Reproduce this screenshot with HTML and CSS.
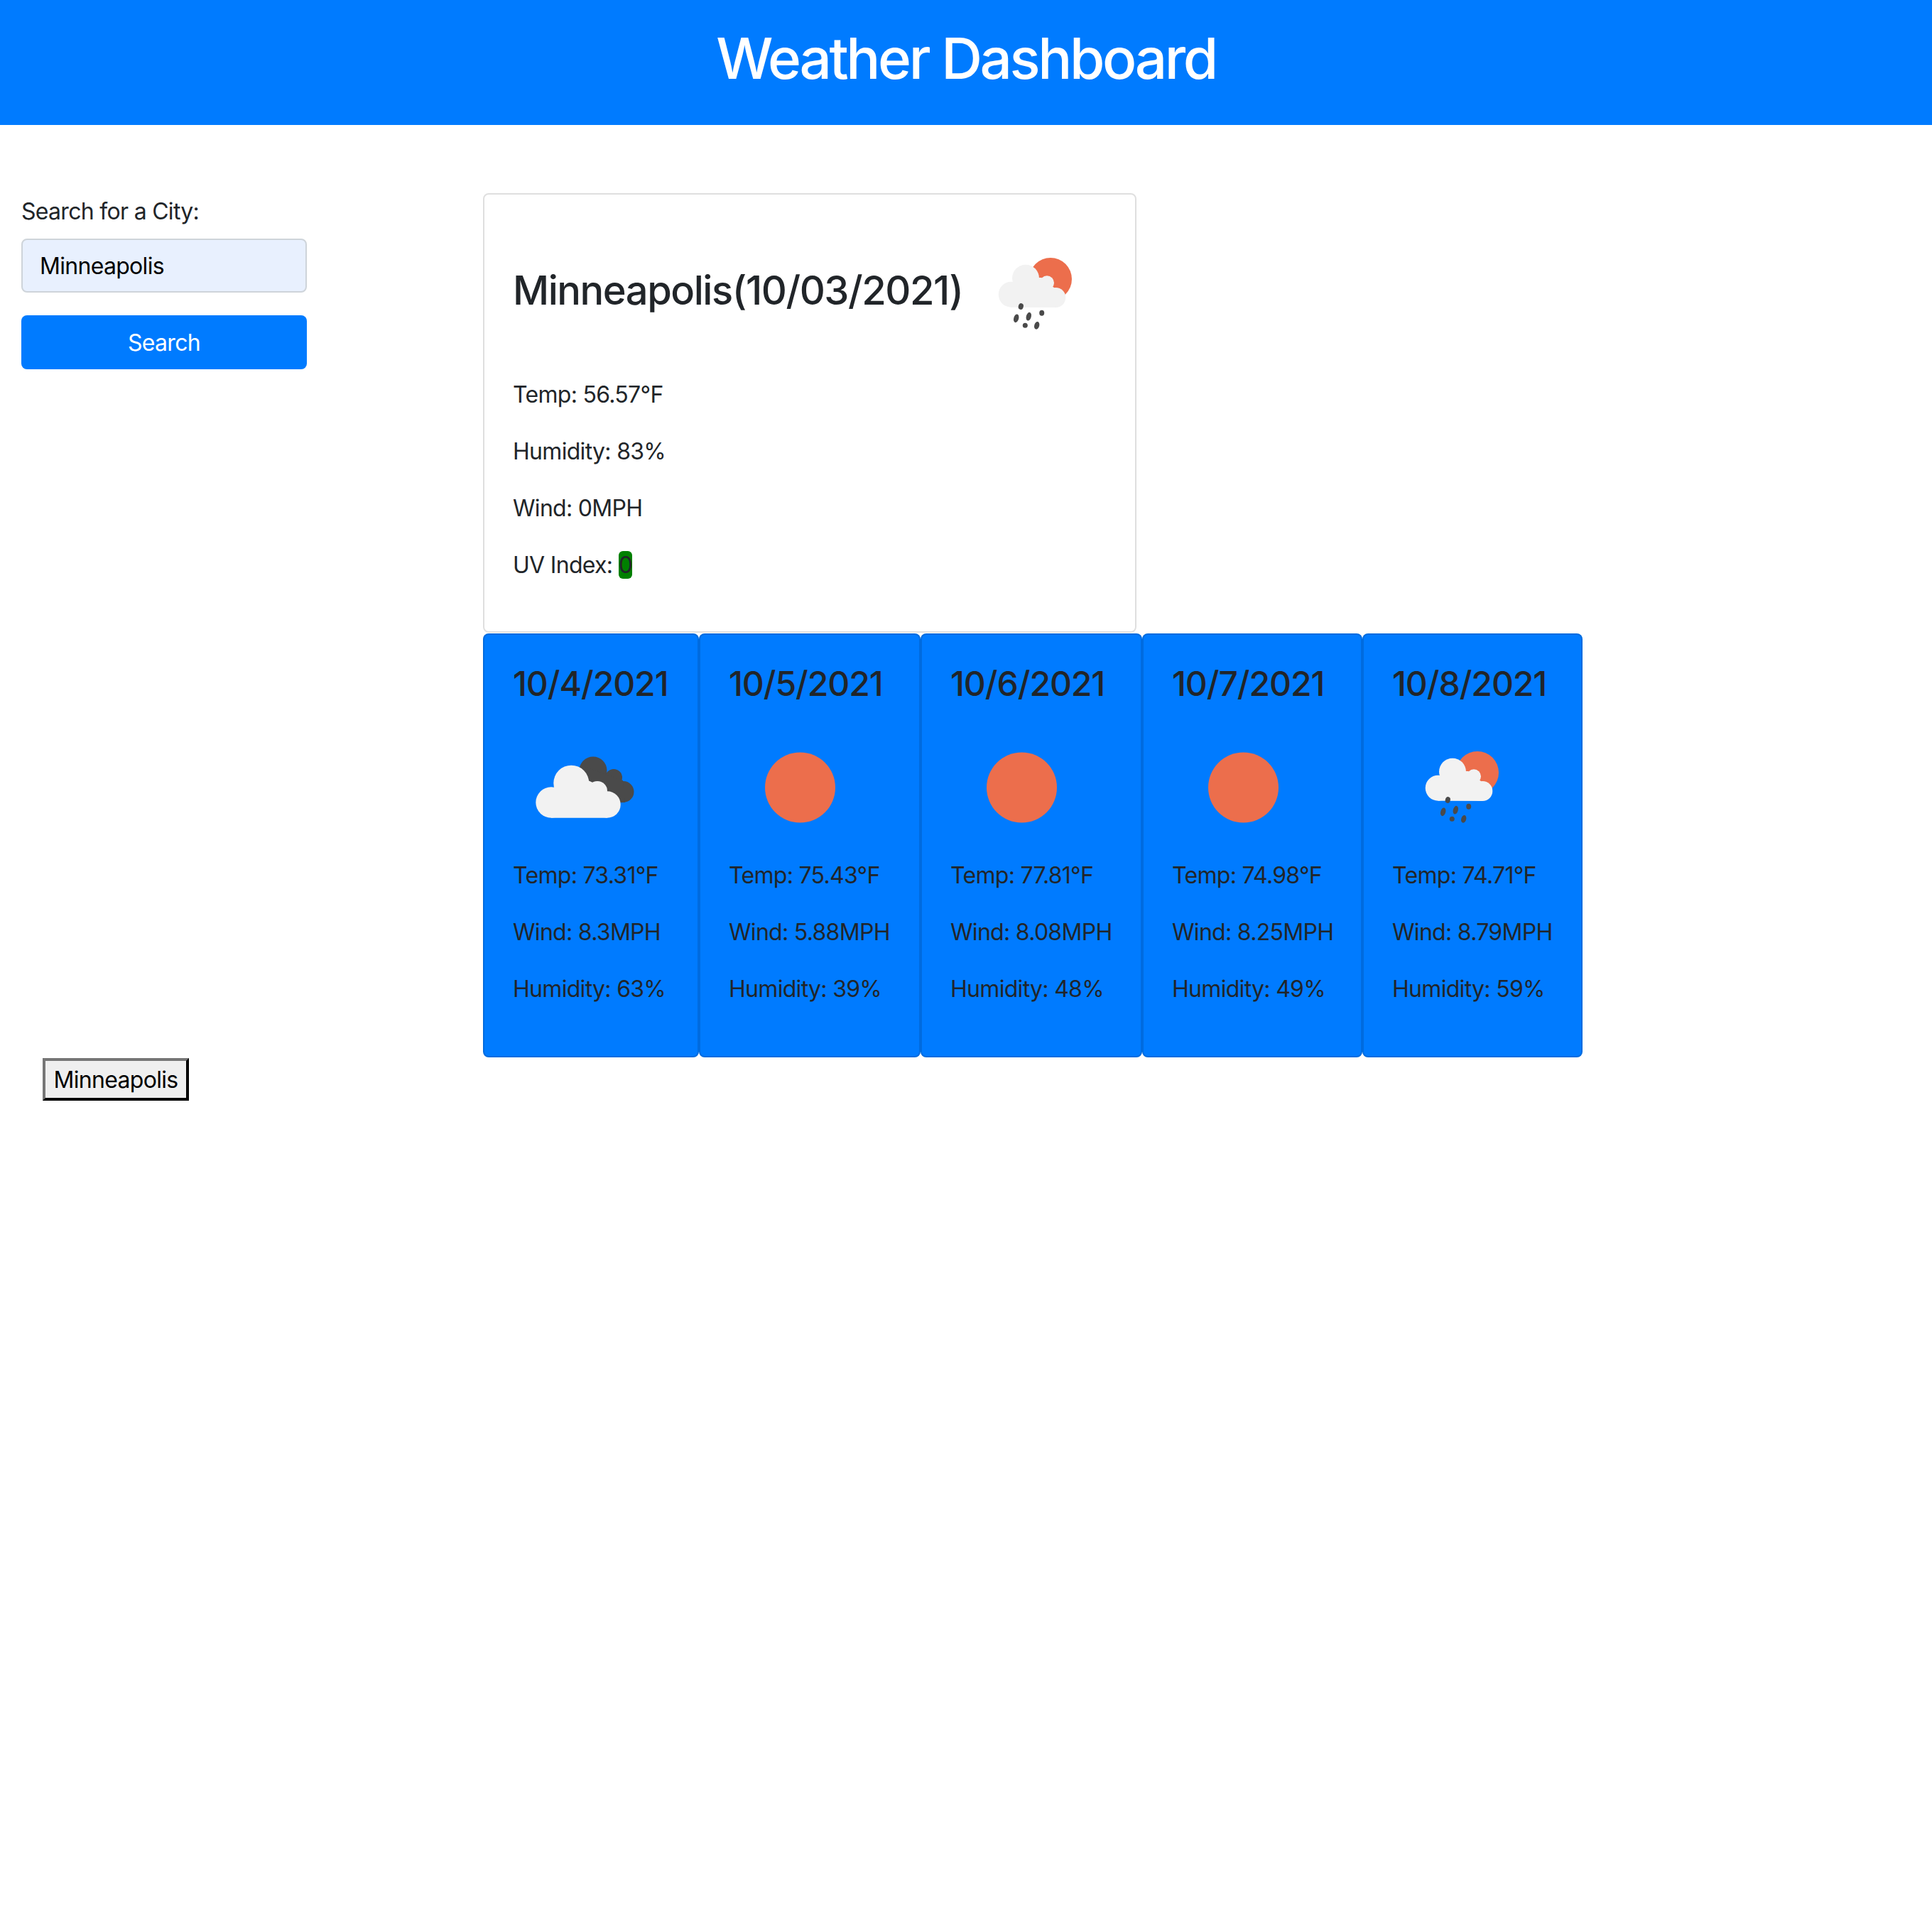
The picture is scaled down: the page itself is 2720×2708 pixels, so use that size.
FILE: index.html
```html
<!DOCTYPE html>
<html>
<head>
    <title>Weather Dashboard</title>
    <link rel="stylesheet" href="styles.css">
</head>
<body>

<svg class="iconDefs" width="0" height="0">
    <defs>
        <symbol id="iconSun" viewBox="0 0 200 200">
            <circle cx="100.500" cy="100" r="49.500" fill="#ec6e4c"/>
        </symbol>
        <symbol id="iconClouds" viewBox="0 0 200 200">
            <g fill="#4a4a4a">
                <circle cx="113" cy="76" r="19.5"/>
                <circle cx="142" cy="86" r="12"/>
                <circle cx="155.500" cy="106" r="15"/>
                <path d="M100 70 L155 90 L158 121 L130 122 Z"/>
            </g>
            <g fill="#f2f2f2">
                <circle cx="54" cy="121" r="21.700"/>
                <circle cx="82.300" cy="93.700" r="25"/>
                <circle cx="119" cy="105" r="14"/>
                <circle cx="133" cy="124" r="18.700"/>
                <path d="M54 142.700 V105 L82 90 H106 L119 96 L129 107 L133 142.700 Z"/>
            </g>
        </symbol>
        <symbol id="iconRain" viewBox="0 0 200 200">
            <circle cx="120" cy="79" r="30" fill="#ec6e4c"/>
            <g fill="#f2f2f2">
                <circle cx="64.700" cy="100.700" r="18"/>
                <circle cx="85" cy="77.700" r="19"/>
                <circle cx="115" cy="84.300" r="10"/>
                <circle cx="127.300" cy="105" r="14"/>
                <path d="M64.700 118.700 V90 L85 77 H107 L118 85 L126 92 L127.300 119 Z"/>
            </g>
            <g fill="#4a4a4a">
                <ellipse cx="78.300" cy="117.500" rx="3.500" ry="4.500" transform="rotate(15 78.300 117.500)"/>
                <ellipse cx="71.700" cy="134.300" rx="3.500" ry="6" transform="rotate(15 71.700 134.300)"/>
                <ellipse cx="89.300" cy="131.700" rx="3.500" ry="6" transform="rotate(15 89.300 131.700)"/>
                <ellipse cx="107.700" cy="126.700" rx="3.500" ry="4"/>
                <ellipse cx="84.300" cy="144.300" rx="3.500" ry="3.500"/>
                <ellipse cx="100.700" cy="144.300" rx="3.500" ry="5.500" transform="rotate(15 100.700 144.300)"/>
            </g>
        </symbol>
    </defs>
</svg>

<header class="pageHeader">
    <h1>Weather Dashboard</h1>
</header>

<div class="pageRow">
    <div class="searchCol">
        <label class="searchLabel" for="cityInput">Search for a City:</label>
        <input class="cityInput" type="text" id="cityInput" value="Minneapolis">
        <button class="searchBtn">Search</button>
    </div>

    <div class="weatherCol">
        <div class="currentCard">
            <h2 class="currentTitle">
                <span class="currentName">Minneapolis(10/03/2021)</span>
                <svg class="weatherIcon"><use href="#iconRain"/></svg>
            </h2>
            <p>Temp: 56.57°F</p>
            <p>Humidity: 83%</p>
            <p>Wind: 0MPH</p>
            <p>UV Index: <span class="uvBadge">0</span></p>
        </div>

        <div class="forecastRow">
            <div class="forecastCard">
                <h3>10/4/2021</h3>
                <svg class="weatherIcon"><use href="#iconClouds"/></svg>
                <p>Temp: 73.31°F</p>
                <p>Wind: 8.3MPH</p>
                <p>Humidity: 63%</p>
            </div>
            <div class="forecastCard">
                <h3>10/5/2021</h3>
                <svg class="weatherIcon"><use href="#iconSun"/></svg>
                <p>Temp: 75.43°F</p>
                <p>Wind: 5.88MPH</p>
                <p>Humidity: 39%</p>
            </div>
            <div class="forecastCard">
                <h3>10/6/2021</h3>
                <svg class="weatherIcon"><use href="#iconSun"/></svg>
                <p>Temp: 77.81°F</p>
                <p>Wind: 8.08MPH</p>
                <p>Humidity: 48%</p>
            </div>
            <div class="forecastCard">
                <h3>10/7/2021</h3>
                <svg class="weatherIcon"><use href="#iconSun"/></svg>
                <p>Temp: 74.98°F</p>
                <p>Wind: 8.25MPH</p>
                <p>Humidity: 49%</p>
            </div>
            <div class="forecastCard">
                <h3>10/8/2021</h3>
                <svg class="weatherIcon"><use href="#iconRain"/></svg>
                <p>Temp: 74.71°F</p>
                <p>Wind: 8.79MPH</p>
                <p>Humidity: 59%</p>
            </div>
        </div>
    </div>
</div>

<div class="historyList">
    <button class="historyBtn">Minneapolis</button>
</div>

</body>
</html>
```

FILE: styles.css
```css
body {
    margin: 0;
    font-family: Inter, "Liberation Sans", sans-serif;
    font-size: 32px;
    line-height: 48px;
    letter-spacing: -0.7px;
    color: #212529;
    background: #fff;
}
p {
    margin: 0 0 32px;
}
.iconDefs {
    display: block;
    height: 0;
}
.pageHeader {
    height: 176px;
    padding-top: 34px;
    box-sizing: border-box;
    background: #007bff;
    color: #fff;
    text-align: center;
}
.pageHeader h1 {
    margin: 0;
    font-size: 80px;
    line-height: 96px;
    font-weight: 500;
    letter-spacing: -3.4px;
}
.pageRow {
    display: flex;
    padding-top: 96px;
}
.searchCol {
    flex: none;
    width: 402px;
    margin: 0 248px 0 30px;
    display: flex;
    flex-direction: column;
}
.searchLabel {
    padding-top: 2px;
    margin-bottom: 14px;
}
.cityInput {
    height: 76px;
    padding: 0 24px;
    box-sizing: border-box;
    border: 2px solid #ced4da;
    border-radius: 8px;
    background: #e8f0fe;
    font: inherit;
    letter-spacing: inherit;
    color: #000;
    margin-bottom: 32px;
}
.searchBtn {
    height: 76px;
    padding-top: 3px;
    border: 0;
    border-radius: 8px;
    background: #007bff;
    color: #fff;
    font: inherit;
    letter-spacing: inherit;
}
.weatherCol {
    flex: none;
}
.currentCard {
    width: 920px;
    height: 619px;
    padding: 40px;
    box-sizing: border-box;
    border: 2px solid rgba(0, 0, 0, .125);
    border-radius: 8px;
}
.currentTitle {
    display: flex;
    margin: 0 0 18px;
    font-size: 56px;
    line-height: 67px;
    font-weight: 500;
    letter-spacing: -1.45px;
}
.currentName {
    flex: none;
    width: 637px;
    margin-top: 62px;
    white-space: nowrap;
}
.weatherIcon {
    display: block;
    flex: none;
    width: 200px;
    height: 200px;
}
.uvBadge {
    background: #008000;
    border-radius: 6px;
}
.forecastRow {
    display: grid;
    grid-template-columns: 304px 312px 312px 310px 310px;
    margin-top: 1px;
}
.forecastCard {
    height: 597px;
    padding: 40px;
    box-sizing: border-box;
    border: 2px solid rgba(0, 0, 0, .125);
    border-radius: 8px;
    background: #007bff;
    white-space: nowrap;
}
.forecastCard h3 {
    margin: 0 0 17px;
    font-size: 48px;
    line-height: 58px;
    font-weight: 500;
    letter-spacing: -1.05px;
}
.historyList {
    padding: 1px 0 0 60px;
}
.historyBtn {
    height: 60px;
    width: 206px;
    padding: 2px 0 0;
    border: 4px outset #767676;
    border-color: #767676 #1f1f1f #1f1f1f #767676;
    background: #efefef;
    color: #000;
    font: inherit;
    letter-spacing: inherit;
}
```
